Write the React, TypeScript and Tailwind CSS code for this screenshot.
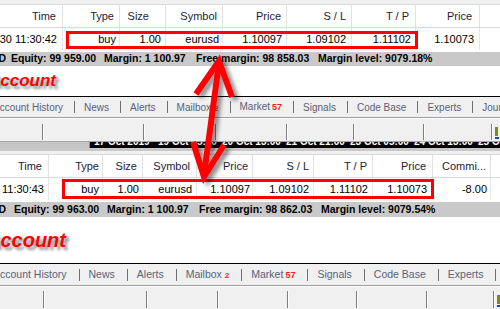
import React from "react";

type Col = { w: string; head: string; val: string; hp: string; dp: string };

const topCols: Col[] = [
  { w: "w-[63px]", head: "Time", val: "2019.10.30 11:30:42", hp: "pr-[6px]", dp: "pr-[5px]" },
  { w: "w-[57px]", head: "Type", val: "buy", hp: "pr-[5px]", dp: "pr-[3px]" },
  { w: "w-[46px]", head: "Size", val: "1.00", hp: "pr-[16px]", dp: "pr-[4px]" },
  { w: "w-[57px]", head: "Symbol", val: "eurusd", hp: "pr-[5px]", dp: "pr-[3px]" },
  { w: "w-[64px]", head: "Price", val: "1.10097", hp: "pr-[5px]", dp: "pr-[4px]" },
  { w: "w-[65px]", head: "S / L", val: "1.09102", hp: "pr-[5px]", dp: "pr-[5px]" },
  { w: "w-[64px]", head: "T / P", val: "1.11102", hp: "pr-[6px]", dp: "pr-[4px]" },
  { w: "w-[64px]", head: "Price", val: "1.10073", hp: "pr-[7px]", dp: "pr-[5px]" },
  { w: "w-[40px]", head: "", val: "", hp: "pr-[4px]", dp: "pr-[4px]" },
];

const bottomCols: Col[] = [
  { w: "w-[49px]", head: "Time", val: "2019.10.30 11:30:43", hp: "pr-[6px]", dp: "pr-[4px]" },
  { w: "w-[54px]", head: "Type", val: "buy", hp: "pr-[3px]", dp: "pr-[3px]" },
  { w: "w-[40px]", head: "Size", val: "1.00", hp: "pr-[5px]", dp: "pr-[3px]" },
  { w: "w-[54px]", head: "Symbol", val: "eurusd", hp: "pr-[6px]", dp: "pr-[4px]" },
  { w: "w-[56px]", head: "Price", val: "1.10097", hp: "pr-[4px]", dp: "pr-[2px]" },
  { w: "w-[61px]", head: "S / L", val: "1.09102", hp: "pr-[4px]", dp: "pr-[4px]" },
  { w: "w-[59px]", head: "T / P", val: "1.11102", hp: "pr-[5px]", dp: "pr-[4px]" },
  { w: "w-[60px]", head: "Price", val: "1.10073", hp: "pr-[6px]", dp: "pr-[5px]" },
  { w: "w-[58px]", head: "Commi...", val: "-8.00", hp: "pr-[4px]", dp: "pr-[3px]" },
  { w: "w-[20px]", head: "", val: "", hp: "pr-[4px]", dp: "pr-[4px]" },
];

const tabs = ["Account History", "News", "Alerts", "Mailbox", "Market", "Signals", "Code Base", "Experts", "Journal"];
const dates = ["17 Oct 2019", "19 Oct 05:00", "20 Oct 13:00", "21 Oct 21:00", "23 Oct 05:00", "24 Oct 13:00", "25 Oct 21:00"];

function Grid({ cols, headH, box }: { cols: Col[]; headH: string; box: string }) {
  return (
    <div className="flex flex-col bg-white text-[11px]">
      <div className={`flex ${headH} border-b border-[#d9d9d9]`}>
        {cols.map((c, i) => (
          <div
            key={i}
            className={`${c.w} ${c.hp} shrink-0 flex items-center justify-end overflow-hidden whitespace-nowrap border-r border-[#e2e2e2] text-[#1d1b3a]`}
          >
            {c.head}
          </div>
        ))}
      </div>
      <div className="relative flex h-[22px]">
        {cols.map((c, i) => (
          <div
            key={i}
            className={`${c.w} ${c.dp} shrink-0 flex items-center justify-end overflow-hidden whitespace-nowrap border-r border-[#e6e6e6] text-black`}
          >
            {c.val}
          </div>
        ))}
        <div className={`absolute border-[3px] border-[#ff0000] ${box}`} />
      </div>
    </div>
  );
}

function Status({ h, lead, items }: { h: string; lead: string; items: string[] }) {
  return (
    <div className={`flex ${h} items-center bg-[#c9c9c9] text-[10.5px] font-bold text-black whitespace-nowrap overflow-hidden`}>
      <div className="w-[6px] shrink-0 flex justify-end overflow-hidden">USD</div>
      <span className={`${lead} w-[93px] shrink-0`}>{items[0]}</span>
      <span className="w-[92px] shrink-0">{items[1]}</span>
      <span className="w-[122px] shrink-0">{items[2]}</span>
      <span className="shrink-0">{items[3]}</span>
    </div>
  );
}

function Tabs({ h, size, sepL, sepR }: { h: string; size: string; sepL: string; sepR: string }) {
  return (
    <div className={`flex ${h} items-center border-t border-black bg-[#f0f0f0] ${size} text-[#59627a] whitespace-nowrap overflow-hidden`}>
      <div className="flex items-center ml-[-7px]">
        {tabs.map((t, i) => (
          <div key={t} className="flex items-center">
            {i > 0 && <div className={`w-px h-[12px] bg-[#6f6f6f] ${sepL} ${sepR}`} />}
            <span className="flex items-baseline">
              {t}
              {t === "Mailbox" && <span className="ml-[3px] text-[8px] font-bold text-[#ff1a1a]">2</span>}
              {t === "Market" && <span className="ml-[2px] text-[9px] font-bold text-[#ff1a1a]">57</span>}
            </span>
          </div>
        ))}
      </div>
    </div>
  );
}

function Toolbar({ pad, widths }: { pad: string; widths: string[] }) {
  return (
    <div className={`flex h-[22px] bg-[#f0f0f0] ${pad} pb-[1px] overflow-hidden`}>
      {widths.map((w, i) => (
        <div key={i} className={`${w} shrink-0 border-r border-r-[#7e7e7e] shadow-[1px_0_0_#ffffff]`} />
      ))}
      <div className="ml-[3px] flex shrink-0 flex-col justify-end pb-[1px]">
        <div className="w-[3px] h-[9px] bg-[#7c8c10]" />
        <div className="mt-[1px] w-[4px] h-[2px] bg-[#1f3fbf]" />
      </div>
    </div>
  );
}

export default function App() {
  return (
    <div className="relative w-[500px] h-[309px] overflow-hidden bg-white font-['Liberation_Sans',Arial,sans-serif]">
      <div className="h-[5px] bg-[#f0f0f0] border-b border-[#d9d9d9]" />
      <Grid cols={topCols} headH="h-[23px]" box="left-[66px] top-[3px] w-[352px] h-[18px]" />
      <div className="h-[2px]" />
      <Status
        h="h-[14px]"
        lead="ml-[5px]"
        items={["Equity: 99 959.00", "Margin: 1 100.97", "Free margin: 98 858.03", "Margin level: 9079.18%"]}
      />
      <div className="h-[30px] pt-[6px] overflow-hidden">
        <div className="ml-[-12px] text-[17px] leading-none font-bold italic text-[#ff0000] [text-shadow:3px_3px_3px_rgba(0,0,0,0.45)]">
          Account
        </div>
      </div>
      <Tabs h="h-[21px]" size="text-[10px]" sepL="ml-[11px]" sepR="mr-[9px]" />
      <div className="h-px bg-[#a0a0a0]" />
      <div className="h-px bg-white" />
      <Toolbar pad="pt-[5px]" widths={["w-[43px]", "w-[101px]", "w-[72px]", "w-[71px]", "w-[67px]", "w-[70px]", "w-[68px]"]} />
      <div className="h-px bg-[#a8a8a8]" />
      <div className="flex h-[6px] overflow-hidden">
        <div className="w-[90px] shrink-0 bg-[#c6c6c6] border-r border-[#8a8a8a]" />
        <div className="flex flex-1 bg-black pl-[4px] overflow-hidden">
          {dates.map((d) => (
            <div key={d} className="w-[64px] shrink-0 mt-[-6px] text-[10px] leading-[12px] font-bold text-white whitespace-nowrap">
              {d}
            </div>
          ))}
        </div>
      </div>
      <div className="h-[3px] bg-[#c8c8c8]" />
      <div className="h-[3px] bg-[#f0f0f0]" />
      <div className="border-t border-[#d9d9d9]">
        <Grid cols={bottomCols} headH="h-[23px]" box="left-[62px] top-[1px] w-[372px] h-[20px]" />
      </div>
      <div className="h-[2px]" />
      <Status
        h="h-[15px]"
        lead="ml-[8px]"
        items={["Equity: 99 963.00", "Margin: 1 100.97", "Free margin: 98 862.03", "Margin level: 9079.54%"]}
      />
      <div className="h-[46px] pt-[13px] overflow-hidden">
        <div className="ml-[-14px] text-[20px] leading-none font-bold italic text-[#ff0000] [text-shadow:3px_3px_3px_rgba(0,0,0,0.45)]">
          Account
        </div>
      </div>
      <Tabs h="h-[22px]" size="text-[10.5px]" sepL="ml-[12px]" sepR="mr-[9px]" />
      <div className="h-px bg-[#a0a0a0]" />
      <div className="h-px bg-white" />
      <Toolbar pad="pt-[4px]" widths={["w-[44px]", "w-[103px]", "w-[71px]", "w-[70px]", "w-[69px]", "w-[70px]", "w-[67px]"]} />

      <svg className="absolute left-0 top-0 pointer-events-none" width="500" height="309" viewBox="0 0 500 309">
        <defs>
          <filter id="sh" x="-50%" y="-50%" width="200%" height="200%">
            <feDropShadow dx="4" dy="3" stdDeviation="2" floodColor="#000" floodOpacity="0.45" />
          </filter>
        </defs>
        <g filter="url(#sh)" fill="none" stroke="#ff0000" strokeWidth="6" strokeLinejoin="miter">
          <path d="M219 63 L204 175" />
          <path d="M196 94 L219 61 L232 97" />
          <path d="M193 142 L204 177 L224 145" />
        </g>
      </svg>
    </div>
  );
}
